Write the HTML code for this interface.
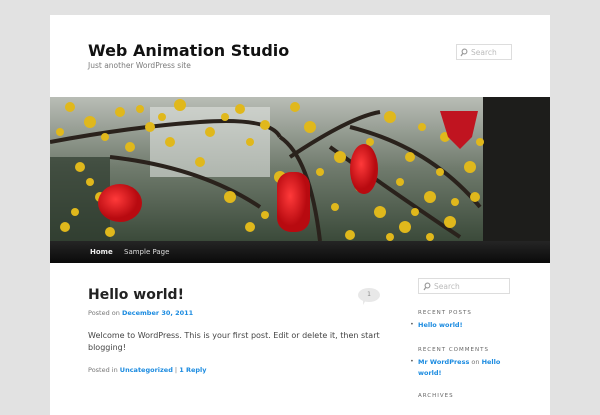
<!DOCTYPE html>
<html><head><meta charset="utf-8"><style>
*{margin:0;padding:0;box-sizing:border-box}
body{width:600px;height:400px;overflow:hidden;background:#e2e2e2;font-family:"DejaVu Sans","Liberation Sans",sans-serif;position:relative}
#page{position:absolute;left:50px;top:15px;width:500px;height:400px;background:#fff}
.a{position:absolute;white-space:nowrap}
a{color:#1b8be0;font-weight:bold;text-decoration:none}
.srch{position:absolute;border:1px solid #ddd;background:#fff;color:#bbb}
.lbl{font-size:5.5px;letter-spacing:1px;color:#666;text-transform:uppercase}
</style></head><body>
<div id="page"></div>
<div class="a" style="left:88px;top:41px;font-size:16px;font-weight:bold;color:#111">Web Animation Studio</div>
<div class="a" style="left:88px;top:61px;font-size:7.5px;color:#7a7a7a">Just another WordPress site</div>
<div class="srch" style="left:456px;top:44px;width:56px;height:16px"><svg class="a" style="left:3px;top:3px" width="8" height="9" viewBox="0 0 8 9"><circle cx="4.5" cy="3.5" r="2.4" fill="none" stroke="#999" stroke-width="1.1"/><path d="M3 5 L1 8" stroke="#999" stroke-width="1.2"/></svg><span class="a" style="left:14px;top:3px;font-size:7.5px">Search</span></div>
<svg style="position:absolute;left:50px;top:97px" width="500" height="144" viewBox="0 0 500 144">
<defs><linearGradient id="g" x1="0" y1="0" x2="0" y2="1"><stop offset="0" stop-color="#b9bdb6"/><stop offset=".5" stop-color="#6f7a6c"/><stop offset="1" stop-color="#3b4a3a"/></linearGradient>
<radialGradient id="l" cx=".4" cy=".4"><stop offset="0" stop-color="#ff3a3a"/><stop offset="1" stop-color="#b80a10"/></radialGradient></defs>
<rect width="500" height="144" fill="url(#g)"/>
<rect x="100" y="10" width="120" height="70" fill="#dfe3e0" opacity=".6"/>
<rect x="0" y="60" width="60" height="84" fill="#2e3a2e" opacity=".7"/>
<rect x="433" y="0" width="67" height="144" fill="#1d1d1b"/>
<g stroke="#2a221c" stroke-width="4" fill="none">
<path d="M0 45 Q80 30 150 25 T230 40"/><path d="M230 40 Q260 60 270 144"/><path d="M60 60 Q150 70 210 110"/><path d="M240 60 Q300 20 330 15"/><path d="M280 50 Q350 100 410 140"/><path d="M300 30 Q380 50 430 110"/></g>
<g fill="#e0b81c">
<circle cx="20" cy="10" r="5"/><circle cx="40" cy="25" r="6"/><circle cx="70" cy="15" r="5"/><circle cx="100" cy="30" r="5"/><circle cx="130" cy="8" r="6"/><circle cx="160" cy="35" r="5"/><circle cx="190" cy="12" r="5"/><circle cx="215" cy="28" r="5"/><circle cx="30" cy="70" r="5"/><circle cx="50" cy="100" r="5"/><circle cx="15" cy="130" r="5"/><circle cx="60" cy="135" r="5"/><circle cx="120" cy="45" r="5"/><circle cx="150" cy="65" r="5"/><circle cx="180" cy="100" r="6"/><circle cx="200" cy="130" r="5"/><circle cx="230" cy="80" r="6"/><circle cx="250" cy="100" r="5"/><circle cx="260" cy="30" r="6"/><circle cx="290" cy="60" r="6"/><circle cx="310" cy="90" r="5"/><circle cx="330" cy="115" r="6"/><circle cx="355" cy="130" r="6"/><circle cx="340" cy="20" r="6"/><circle cx="360" cy="60" r="5"/><circle cx="380" cy="100" r="6"/><circle cx="400" cy="125" r="6"/><circle cx="410" cy="20" r="5"/><circle cx="420" cy="70" r="6"/><circle cx="395" cy="40" r="5"/><circle cx="245" cy="10" r="5"/><circle cx="80" cy="50" r="5"/><circle cx="300" cy="138" r="5"/><circle cx="425" cy="100" r="5"/>
<circle cx="10" cy="35" r="4"/><circle cx="55" cy="40" r="4"/><circle cx="90" cy="12" r="4"/><circle cx="112" cy="20" r="4"/><circle cx="175" cy="20" r="4"/><circle cx="200" cy="45" r="4"/><circle cx="270" cy="75" r="4"/><circle cx="320" cy="45" r="4"/><circle cx="350" cy="85" r="4"/><circle cx="372" cy="30" r="4"/><circle cx="390" cy="75" r="4"/><circle cx="405" cy="105" r="4"/><circle cx="365" cy="115" r="4"/><circle cx="285" cy="110" r="4"/><circle cx="215" cy="118" r="4"/><circle cx="40" cy="85" r="4"/><circle cx="25" cy="115" r="4"/><circle cx="430" cy="45" r="4"/><circle cx="380" cy="140" r="4"/><circle cx="340" cy="140" r="4"/></g>
<ellipse cx="70" cy="106" rx="22" ry="19" fill="url(#l)"/>
<rect x="227" y="75" width="33" height="60" rx="14" fill="url(#l)"/>
<ellipse cx="314" cy="72" rx="14" ry="25" fill="url(#l)"/>
<path d="M390 14 L428 14 L422 40 L410 52 L398 40 Z" fill="#c01420"/>
</svg>
<div class="a" style="left:50px;top:241px;width:500px;height:22px;background:linear-gradient(#252525,#0a0a0a)"></div>
<div class="a" style="left:90px;top:248px;font-size:7px;font-weight:bold;color:#eee">Home</div>
<div class="a" style="left:124px;top:248px;font-size:7px;color:#ddd">Sample Page</div>
<div class="a" style="left:88px;top:287px;font-size:14px;font-weight:bold;color:#222">Hello world!</div>
<div class="a" style="left:358px;top:288px;width:22px;height:14px;border-radius:50%;background:#e8e8e8;font-size:6px;color:#888;text-align:center;line-height:14px">1</div>
<div class="a" style="left:363px;top:300px;width:0;height:0;border-left:3px solid #e8e8e8;border-bottom:5px solid transparent"></div>
<div class="a" style="left:88px;top:309px;font-size:6.5px;color:#777">Posted on <a>December 30, 2011</a></div>
<div class="a" style="left:88px;top:330px;font-size:8px;color:#444;line-height:12px">Welcome to WordPress. This is your first post. Edit or delete it, then start<br>blogging!</div>
<div class="a" style="left:88px;top:366px;font-size:6.5px;color:#777">Posted in <a>Uncategorized</a> | <a>1 Reply</a></div>
<div class="srch" style="left:418px;top:278px;width:92px;height:16px"><svg class="a" style="left:4px;top:3px" width="8" height="9" viewBox="0 0 8 9"><circle cx="4.5" cy="3.5" r="2.4" fill="none" stroke="#999" stroke-width="1.1"/><path d="M3 5 L1 8" stroke="#999" stroke-width="1.2"/></svg><span class="a" style="left:15px;top:3px;font-size:7.5px">Search</span></div>
<div class="a lbl" style="left:418px;top:310px">Recent Posts</div>
<div class="a" style="left:410px;top:320px;font-size:6.5px;color:#666">•</div>
<div class="a" style="left:418px;top:321px;font-size:6.5px"><a>Hello world!</a></div>
<div class="a lbl" style="left:418px;top:347px">Recent Comments</div>
<div class="a" style="left:410px;top:357px;font-size:6.5px;color:#666">•</div>
<div class="a" style="left:418px;top:357px;font-size:6.5px;color:#777;line-height:11px"><a>Mr WordPress</a> on <a>Hello</a><br><a>world!</a></div>
<div class="a lbl" style="left:418px;top:393px">Archives</div>
</body></html>
